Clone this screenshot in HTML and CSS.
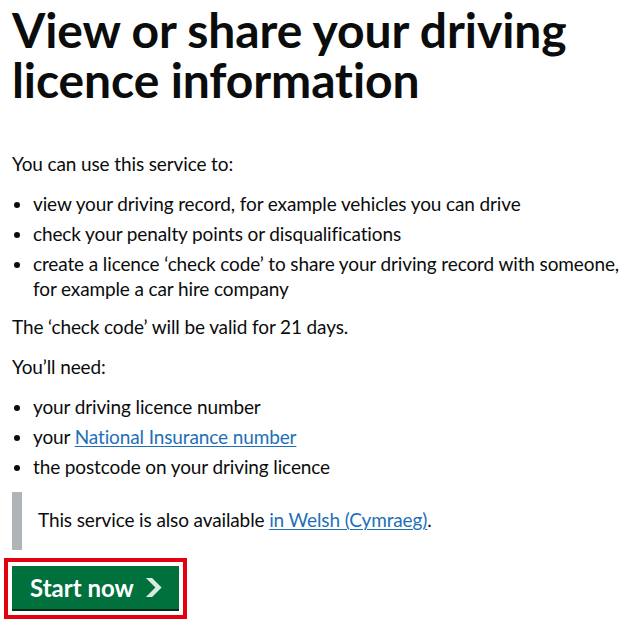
FILE: index.html
```html
<!DOCTYPE html>
<html>
<head>
  <title>View or share your driving licence information - GOV.UK</title>
  <link rel="stylesheet" href="styles.css">
</head>
<body>
  <main class="page">
    <h1 class="heading">View or share your driving licence information</h1>

    <p class="body-text">You can use this service to:</p>
    <ul class="bullets">
      <li>view your driving record, for example vehicles you can drive</li>
      <li>check your penalty points or disqualifications</li>
      <li>create a licence ‘check code’ to share your driving record with someone, for example a car hire company</li>
    </ul>

    <p class="body-text">The ‘check code’ will be valid for 21 days.</p>
    <p class="body-text">You’ll need:</p>
    <ul class="bullets">
      <li>your driving licence number</li>
      <li>your <a class="link" href="#">National Insurance number</a></li>
      <li>the postcode on your driving licence</li>
    </ul>

    <div class="inset">
      This service is also available <a class="link" href="#">in Welsh (Cymraeg)</a>.
    </div>

    <div class="highlight">
      <a class="start-button" href="#">
        Start now
        <svg class="start-icon" width="17.5" height="19" viewBox="0 0 33 40" aria-hidden="true">
          <path fill="currentColor" d="M0 0h13l20 20-20 20H0l20-20z" />
        </svg>
      </a>
    </div>
  </main>
</body>
</html>
```

FILE: styles.css
```css
body {
  font-family: Lato, 'Liberation Sans', Arial, sans-serif;
  font-variant-ligatures: none;
  background-color: #fff;
  color: #0b0c0c;
  margin: 0;
}

.page {
  padding: 5px 4px 0 12px;
}

.heading {
  font-size: 48px;
  line-height: 50px;
  font-weight: 700;
  margin: 0 0 46px 0;
  letter-spacing: -0.1px;
}

.body-text {
  font-size: 19px;
  line-height: 25px;
  letter-spacing: -0.12px;
  margin: 0 0 15px 0;
}

.bullets {
  font-size: 19px;
  line-height: 25px;
  letter-spacing: -0.12px;
  margin: 0 0 13px 0;
  padding-left: 21px;
}

.bullets li {
  margin-bottom: 5px;
}

.link {
  color: #1d70b8;
  text-decoration: underline;
  text-decoration-thickness: 1px;
  text-underline-offset: 2px;
}

.inset {
  font-size: 19px;
  line-height: 25px;
  letter-spacing: -0.12px;
  padding: 15px 15px 18px 16px;
  border-left: 10px solid #b1b4b6;
  margin: 0 0 8px 0;
}

/* red box drawn round the button in the screenshot */
.highlight {
  display: inline-block;
  border: 4px solid #e3000f;
  padding: 4px;
  margin-left: -8px;
}

.start-button {
  display: flex;
  align-items: center;
  background-color: #00703c;
  color: #fff;
  font-size: 24px;
  font-weight: 700;
  line-height: 25px;
  padding: 9px 17px 9px 18px;
  box-shadow: 0 2px 0 #002d18;
  text-decoration: none;
  margin-bottom: 2px;
}

.start-icon {
  margin-left: 11px;
  color: #fff;
}

.start-icon path {
  fill-opacity: 0.85;
}
```
